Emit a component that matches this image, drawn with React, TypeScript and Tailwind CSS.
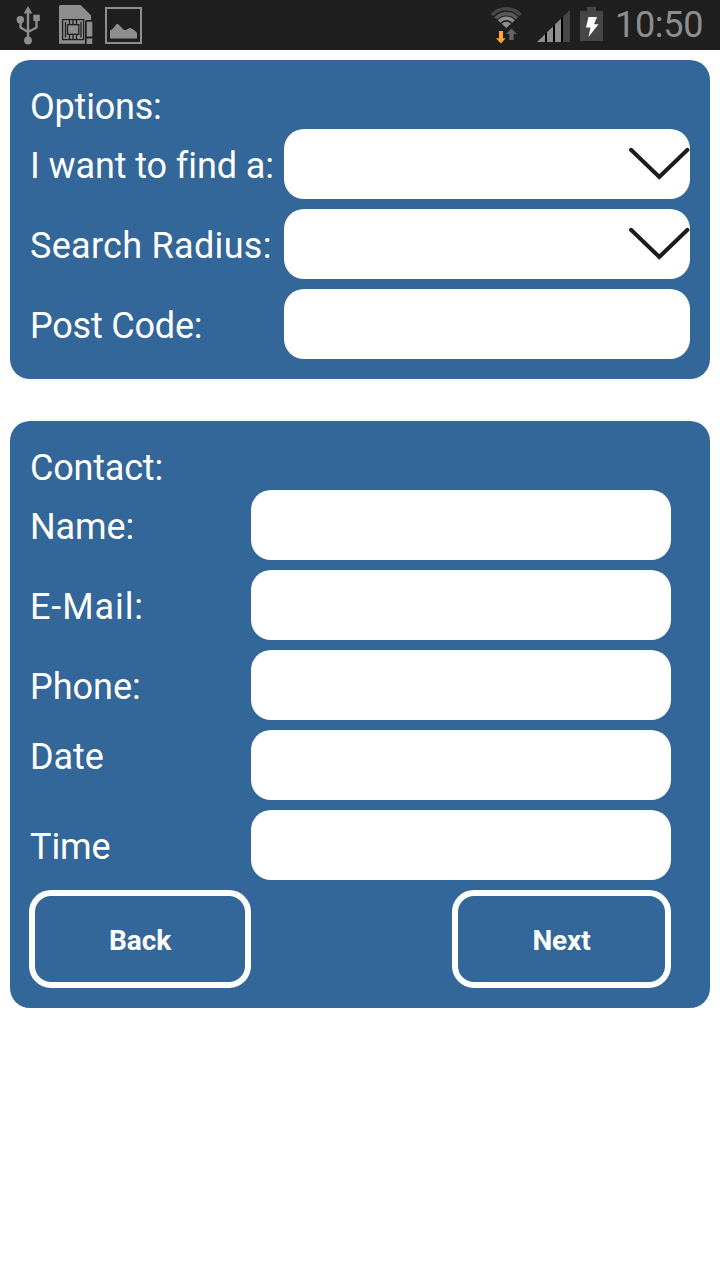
import type { ReactNode } from "react";

function UsbIcon() {
  return (
    <svg width="24" height="40" viewBox="0 0 24 40" fill="#8e8e8e">
      <path d="M12 1l4.300 7.500H7.700z" />
      <path
        d="M12 6v29M4.500 15v7.500L12 27M20.500 13v9.500L12 27"
        fill="none"
        stroke="#8e8e8e"
        strokeWidth="2.400"
        strokeLinejoin="round"
      />
      <circle cx="4.300" cy="14.800" r="3.700" />
      <path d="M17.300 9.700h6.500V16h-6.500z" />
      <circle cx="12" cy="35.500" r="3.900" />
    </svg>
  );
}

function SimCardIcon() {
  return (
    <svg width="34" height="40" viewBox="0 0 34 40">
      <path d="M0 1.500Q0 0 1.500 0H21.500L32 10.300V15h-5v23.700H0z" fill="#8e8e8e" />
      <g fill="none" stroke="#1f1f1f" strokeWidth="1.300">
        <rect x="3.600" y="14.600" width="21" height="20" />
        <rect x="8.500" y="19.700" width="11.300" height="9.600" />
        <path d="M6.500 17v15.500M22 17v15.500M10.500 15v4M14 15v4M17.500 15v4M10.500 30v4M14 30v4M17.500 30v4" />
      </g>
      <path d="M26 15.500h8V39h-8z" fill="#1f1f1f" />
      <path d="M27.700 16.700h5.600v14.800h-5.600zM27.700 33.500h5.600V39h-5.600z" fill="#8e8e8e" />
    </svg>
  );
}

function PictureIcon() {
  return (
    <svg width="37" height="37" viewBox="0 0 37 37">
      <rect x="1" y="1" width="35" height="35" fill="none" stroke="#8e8e8e" strokeWidth="2" />
      <path
        d="M5 31.500v-8c2-.500 3.500-2.500 5-4.500 1-1.500 2-2.500 3.500-1.500l4 4c1 1.500 2.500 2 4 1.200l2.500-1.500c2-1 3.500 1 5 1.800 1 .500 2 1.500 3 3v5.500z"
        fill="#8e8e8e"
      />
    </svg>
  );
}

function WifiIcon() {
  return (
    <svg width="34" height="38" viewBox="0 0 34 38" fill="none">
      <g strokeWidth="3.600">
        <path d="M2 9.100a19.300 19.300 0 0 1 28.600 0" stroke="#464646" />
        <path d="M5.700 12.400a14.300 14.300 0 0 1 21.200 0" stroke="#5a5a5a" />
        <path d="M9.100 15.500a9.700 9.700 0 0 1 14.400 0" stroke="#8e8e8e" />
      </g>
      <path d="M11.600 17.800a6.300 6.300 0 0 1 9.400 0L16.300 22z" fill="#8e8e8e" />
      <path d="M9 25h4v7.200h2.500L11 37.500 6 32.200h3z" fill="#ffa62b" />
      <path d="M19.300 34h4.400v-6H27l-5.500-5.500L16 28h3.300z" fill="#646464" />
    </svg>
  );
}

function SignalIcon() {
  return (
    <svg width="34" height="34" viewBox="0 0 34 34">
      <path d="M0 33L8 25.200V33z" fill="#8e8e8e" />
      <path d="M10 23.200l6-5.800V33h-6z" fill="#8e8e8e" />
      <path d="M18 15.500l6-5.800V33h-6z" fill="#8e8e8e" />
      <path d="M26 7.800L33 1v32h-7z" fill="#464646" />
      <path d="M8 25.200l2-2V33H8zM16 17.400l2-1.900V33h-2zM24 9.700l2-1.900V33h-2z" fill="#000" />
    </svg>
  );
}

function BatteryIcon() {
  return (
    <svg width="23" height="36" viewBox="0 0 23 36">
      <path d="M7 1h9v4h7v30H0V5h7z" fill="#464646" />
      <path d="M8.500 11h8.500l-3 7.300h4.500L8.500 31l2-9.500H6z" fill="#fff" />
    </svg>
  );
}

function StatusBar() {
  return (
    <header className="flex h-[50px] items-start bg-[#1f1f1f]">
      <div className="flex pl-4">
        <div className="pt-[5px]">
          <UsbIcon />
        </div>
        <div className="pt-[5px] pl-[19px]">
          <SimCardIcon />
        </div>
        <div className="pt-[7px] pl-[12px]">
          <PictureIcon />
        </div>
      </div>
      <div className="ml-auto flex pr-4">
        <div className="pt-[6px]">
          <WifiIcon />
        </div>
        <div className="pt-[9px] pl-[13px]">
          <SignalIcon />
        </div>
        <div className="pt-[6px] pl-[9px]">
          <BatteryIcon />
        </div>
        <span className="w-[101px] pt-[4px] pl-[12px] text-[36px] leading-[42px] tracking-[-0.3px] whitespace-nowrap text-[#8e8e8e]">
          10:50
        </span>
      </div>
    </header>
  );
}

function Card({ title, children }: { title: string; children: ReactNode }) {
  return (
    <section className="rounded-[20px] bg-[#336699] px-5 pt-[26px] pb-5 text-white">
      <h2 className="h-[43px] text-[36px] leading-[42px] tracking-[-0.2px]">{title}</h2>
      <div className="flex flex-col gap-2.5">{children}</div>
    </section>
  );
}

function OptionRow({
  label,
  dropdown,
  tracking = "tracking-[-0.1px]",
}: {
  label: string;
  dropdown?: boolean;
  tracking?: string;
}) {
  return (
    <div className="flex h-[70px]">
      <span className={`w-[254px] pt-[16px] text-[36px] leading-[42px] whitespace-nowrap ${tracking}`}>
        {label}
      </span>
      <div className="flex flex-1 items-start justify-end overflow-hidden rounded-[20px] bg-white pt-[17px]">
        {dropdown && (
          <svg width="62" height="36" viewBox="0 0 62 36">
            <path
              d="M3 3.800L31.300 31L59.500 3.800"
              fill="none"
              stroke="#1c1c1c"
              strokeWidth="4"
              strokeLinecap="round"
            />
          </svg>
        )}
      </div>
    </div>
  );
}

function InputRow({
  label,
  raised,
  tracking = "tracking-[-0.1px]",
}: {
  label: string;
  raised?: boolean;
  tracking?: string;
}) {
  return (
    <div className="flex h-[70px]">
      <span className={`w-[221px] text-[36px] leading-[42px] ${tracking} ${raised ? "pt-[6px]" : "pt-[16px]"}`}>
        {label}
      </span>
      <div className="w-[420px] rounded-[20px] bg-white" />
    </div>
  );
}

export default function App() {
  return (
    <div className="h-[1280px] w-[720px] overflow-hidden bg-white font-['Roboto',sans-serif]">
      <StatusBar />
      <main className="flex flex-col gap-[42px] p-2.5">
        <Card title="Options:">
          <OptionRow label="I want to find a:" dropdown />
          <OptionRow label="Search Radius:" dropdown tracking="tracking-[0.3px]" />
          <OptionRow label="Post Code:" tracking="tracking-[-0.2px]" />
        </Card>
        <Card title="Contact:">
          <InputRow label="Name:" />
          <InputRow label="E-Mail:" tracking="tracking-[0.9px]" />
          <InputRow label="Phone:" tracking="tracking-normal" />
          <InputRow label="Date" raised />
          <InputRow label="Time" />
          <div className="-ml-px flex h-[98px] w-[642px] justify-between text-[28px] font-bold tracking-[-0.1px]">
            <button type="button" className="w-[222px] rounded-[22px] border-[6px] border-white pt-[3px]">
              Back
            </button>
            <button type="button" className="w-[219px] rounded-[22px] border-[6px] border-white pt-[3px]">
              Next
            </button>
          </div>
        </Card>
      </main>
    </div>
  );
}
